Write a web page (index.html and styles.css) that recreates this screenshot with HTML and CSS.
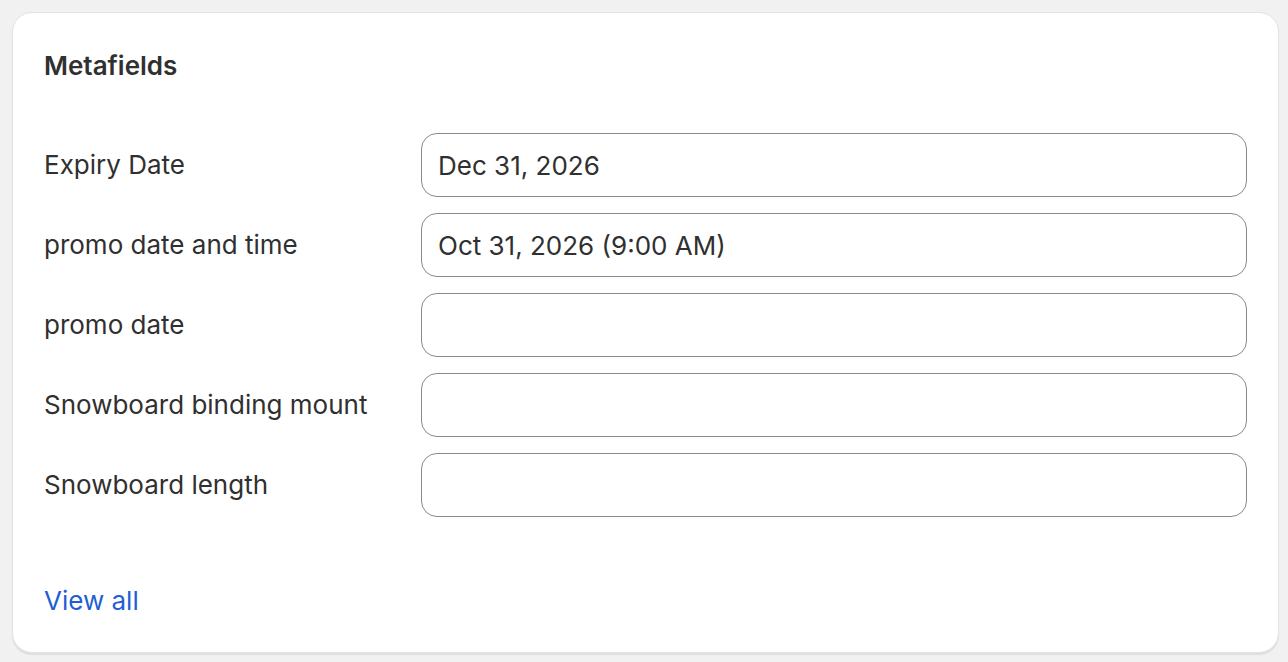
FILE: index.html
```html
<!DOCTYPE html>
<html lang="en">
<head>
<meta charset="utf-8">
<title>Metafields</title>
<link rel="stylesheet" href="styles.css">
</head>
<body>
<section class="card">
  <h2 class="card-title">Metafields</h2>
  <div class="fields">
    <div class="row">
      <label class="label">Expiry Date</label>
      <div class="input">Dec 31, 2026</div>
    </div>
    <div class="row">
      <label class="label">promo date and time</label>
      <div class="input">Oct 31, 2026 (9:00 AM)</div>
    </div>
    <div class="row">
      <label class="label">promo date</label>
      <div class="input"></div>
    </div>
    <div class="row">
      <label class="label">Snowboard binding mount</label>
      <div class="input"></div>
    </div>
    <div class="row">
      <label class="label">Snowboard length</label>
      <div class="input"></div>
    </div>
  </div>
  <a class="view-all" href="#">View all</a>
</section>
</body>
</html>
```

FILE: styles.css
```css
html, body {
  margin: 0;
  padding: 0;
  background: #f1f1f1;
}
body {
  padding: 12px 9px 9px 12px;
  font-family: Inter, "Noto Sans", "Liberation Sans", sans-serif;
  color: #303030;
}
.card {
  box-sizing: border-box;
  width: 1267px;
  height: 641px;
  background: #ffffff;
  border: 1px solid #e3e3e3;
  border-radius: 20px;
  box-shadow: 0 2px 1px rgba(0, 0, 0, 0.08);
  padding: 31px 31px 31px 31px;
  display: flex;
  flex-direction: column;
}
.card-title {
  margin: 2px 0 0 0;
  font-size: 26px;
  font-weight: 600;
  line-height: 40px;
  color: #303030;
}
.fields {
  margin-top: 47px;
  display: flex;
  flex-direction: column;
  gap: 16px;
}
.row {
  display: grid;
  grid-template-columns: 377px 1fr;
  align-items: center;
}
.label {
  font-size: 26px;
  line-height: 36px;
}
.input {
  box-sizing: border-box;
  height: 64px;
  border: 1px solid #8a8a8a;
  border-radius: 16px;
  padding: 0 16px;
  display: flex;
  align-items: center;
  font-size: 26px;
  color: #303030;
}
.view-all {
  margin-top: 64px;
  align-self: flex-start;
  font-size: 26px;
  line-height: 40px;
  color: #1e5fd4;
  text-decoration: none;
}
```
